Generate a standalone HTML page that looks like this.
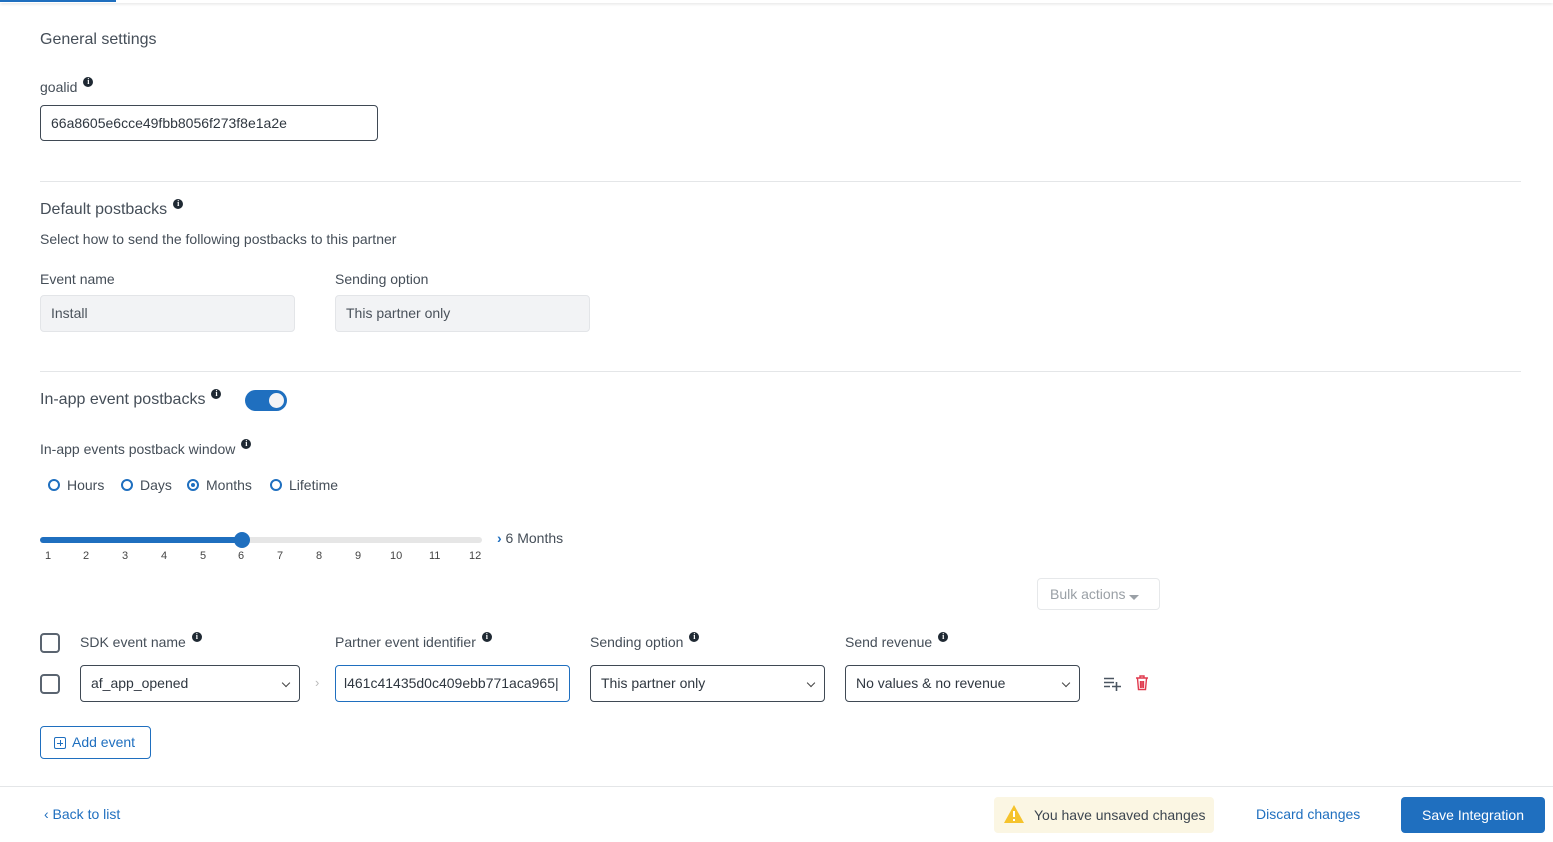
<!DOCTYPE html>
<html><head><meta charset="utf-8"><style>
*{box-sizing:border-box;margin:0;padding:0}
body{width:1553px;height:842px;background:#fff;font-family:"Liberation Sans",sans-serif;color:#454e58;position:relative;overflow:hidden;font-size:14px}
.a{position:absolute;white-space:nowrap}
.i{display:inline-block;width:10px;height:10px;border-radius:50%;background:#1f2933;color:#fff;font-size:8px;font-weight:bold;text-align:center;line-height:10px;font-family:"Liberation Serif",serif;vertical-align:top;margin-left:6px;margin-top:-2px}
.box{position:absolute;border:1px solid #3f4954;border-radius:4px;height:37px;padding-left:10px;line-height:35px;font-size:14px;color:#2f3740}
.dis{background:#f2f3f5;border-color:#e3e5e8;color:#4a525b}
.hr{position:absolute;left:40px;width:1481px;height:1px;background:#e4e6e8}
.rad{display:inline-block;width:12px;height:12px;border:2px solid #1f6fbf;border-radius:50%;vertical-align:-1px;margin-right:7px;position:relative}
.cb{position:absolute;width:20px;height:20px;border:2px solid #5a6470;border-radius:4px}
.chev{position:absolute;right:10px;top:14px;width:6px;height:6px;border-right:1.3px solid #444;border-bottom:1.3px solid #444;transform:rotate(45deg)}
.t{position:absolute;font-size:11px;color:#444;top:550px}
</style></head><body>
<div class="a" style="left:0;top:0;width:1553px;height:3px;box-shadow:0 1px 3px rgba(0,0,0,.12)"></div>
<div class="a" style="left:0;top:0;width:116px;height:2px;background:#1f6fbf"></div>

<div class="a" style="left:40px;top:31px;font-size:16px">General settings</div>
<div class="a" style="left:40px;top:79px;font-size:14px">goalid<span class="i">i</span></div>
<div class="box" style="left:40px;top:105px;width:338px;height:36px;line-height:34px">66a8605e6cce49fbb8056f273f8e1a2e</div>
<div class="hr" style="top:181px"></div>

<div class="a" style="left:40px;top:201px;font-size:16px">Default postbacks<span class="i">i</span></div>
<div class="a" style="left:40px;top:231px;font-size:14px">Select how to send the following postbacks to this partner</div>
<div class="a" style="left:40px;top:271px;font-size:14px">Event name</div>
<div class="a" style="left:335px;top:271px;font-size:14px">Sending option</div>
<div class="box dis" style="left:40px;top:295px;width:255px">Install</div>
<div class="box dis" style="left:335px;top:295px;width:255px">This partner only</div>
<div class="hr" style="top:371px"></div>

<div class="a" style="left:40px;top:391px;font-size:16px">In-app event postbacks<span class="i">i</span></div>
<div class="a" style="left:245px;top:390px;width:42px;height:21px;border-radius:11px;background:#1f6fbf"><div style="position:absolute;right:3px;top:3px;width:15px;height:15px;border-radius:50%;background:#f4f4f6"></div></div>
<div class="a" style="left:40px;top:441px;font-size:14px">In-app events postback window<span class="i">i</span></div>
<div class="a" style="left:48px;top:477px;font-size:14px"><span class="rad"></span>Hours</div>
<div class="a" style="left:121px;top:477px;font-size:14px"><span class="rad"></span>Days</div>
<div class="a" style="left:187px;top:477px;font-size:14px"><span class="rad"><span style="position:absolute;left:2px;top:2px;width:4px;height:4px;border-radius:50%;background:#1f6fbf"></span></span>Months</div>
<div class="a" style="left:270px;top:477px;font-size:14px"><span class="rad"></span>Lifetime</div>

<div class="a" style="left:40px;top:537px;width:442px;height:6px;border-radius:3px;background:#e6e6e6"></div>
<div class="a" style="left:40px;top:537px;width:202px;height:6px;border-radius:3px;background:#1f6fbf"></div>
<div class="a" style="left:234px;top:532px;width:16px;height:16px;border-radius:50%;background:#1f6fbf"></div>
<div class="a" style="left:497px;top:530px;font-size:14px"><span style="color:#1f6fbf;font-weight:bold">›</span> 6 Months</div>
<div class="t" style="left:45px">1</div><div class="t" style="left:83px">2</div><div class="t" style="left:122px">3</div><div class="t" style="left:161px">4</div><div class="t" style="left:200px">5</div><div class="t" style="left:238px">6</div><div class="t" style="left:277px">7</div><div class="t" style="left:316px">8</div><div class="t" style="left:355px">9</div><div class="t" style="left:390px">10</div><div class="t" style="left:429px">11</div><div class="t" style="left:469px">12</div>

<div class="a" style="left:1037px;top:578px;width:123px;height:32px;border:1px solid #e6e8ea;border-radius:4px;color:#9aa0a6;font-size:14px;line-height:30px;padding-left:12px">Bulk actions <span style="display:inline-block;border-left:5px solid transparent;border-right:5px solid transparent;border-top:5px solid #9aa0a6;vertical-align:-1px"></span></div>

<div class="cb" style="left:40px;top:633px"></div>
<div class="a" style="left:80px;top:634px">SDK event name<span class="i">i</span></div>
<div class="a" style="left:335px;top:634px">Partner event identifier<span class="i">i</span></div>
<div class="a" style="left:590px;top:634px">Sending option<span class="i">i</span></div>
<div class="a" style="left:845px;top:634px">Send revenue<span class="i">i</span></div>

<div class="cb" style="left:40px;top:674px"></div>
<div class="box" style="left:80px;top:665px;width:220px">af_app_opened<div class="chev"></div></div>
<div class="a" style="left:315px;top:675px;color:#bbb;font-size:13px">›</div>
<div class="box" style="left:335px;top:665px;width:235px;border-color:#1f6fbf;padding-left:8px;overflow:hidden">l461c41435d0c409ebb771aca965|</div>
<div class="box" style="left:590px;top:665px;width:235px">This partner only<div class="chev"></div></div>
<div class="box" style="left:845px;top:665px;width:235px">No values &amp; no revenue<div class="chev"></div></div>
<svg class="a" style="left:1104px;top:677px" width="18" height="14" viewBox="0 0 18 14"><path d="M0 1.5h10M0 5.5h10M0 9.5h6M8 9.5h9M12.5 5v9" stroke="#4a5561" stroke-width="1.6" fill="none"/></svg>
<svg class="a" style="left:1135px;top:675px" width="14" height="16" viewBox="0 0 14 16"><path d="M1 3h12M5 3V1h4v2M2.5 3.5l1 11h7l1-11M5.5 6v7M7 6v7M8.5 6v7" stroke="#e03a4e" stroke-width="1.4" fill="none"/></svg>

<div class="a" style="left:40px;top:726px;width:111px;height:33px;border:1px solid #1f6fbf;border-radius:4px;color:#1f6fbf;font-size:14px;line-height:31px;padding-left:13px"><span style="display:inline-block;width:12px;height:12px;border:1.3px solid #1f6fbf;border-radius:2px;position:relative;vertical-align:-2px;margin-right:6px"><span style="position:absolute;left:2px;top:4.5px;width:6px;height:1.3px;background:#1f6fbf"></span><span style="position:absolute;left:4.5px;top:2px;width:1.3px;height:6px;background:#1f6fbf"></span></span>Add event</div>

<div class="a" style="left:0;top:786px;width:1553px;height:1px;background:#e4e6e8"></div>
<div class="a" style="left:44px;top:806px;color:#1f6fbf;font-size:14px">‹ Back to list</div>
<div class="a" style="left:994px;top:797px;width:220px;height:36px;background:#fbf6e3;border-radius:4px;font-size:14px;line-height:36px;padding-left:40px;color:#3d4650">You have unsaved changes
<svg style="position:absolute;left:10px;top:8px" width="20" height="18" viewBox="0 0 20 18"><path d="M10 0L20 18H0Z" fill="#f5c32c"/><path d="M10 6v6M10 14v2" stroke="#fff" stroke-width="2"/></svg></div>
<div class="a" style="left:1256px;top:806px;color:#1f6fbf;font-size:14px">Discard changes</div>
<div class="a" style="left:1401px;top:797px;width:144px;height:36px;background:#1f6fbf;border-radius:4px;color:#fff;font-size:14px;line-height:36px;text-align:center">Save Integration</div>
</body></html>
